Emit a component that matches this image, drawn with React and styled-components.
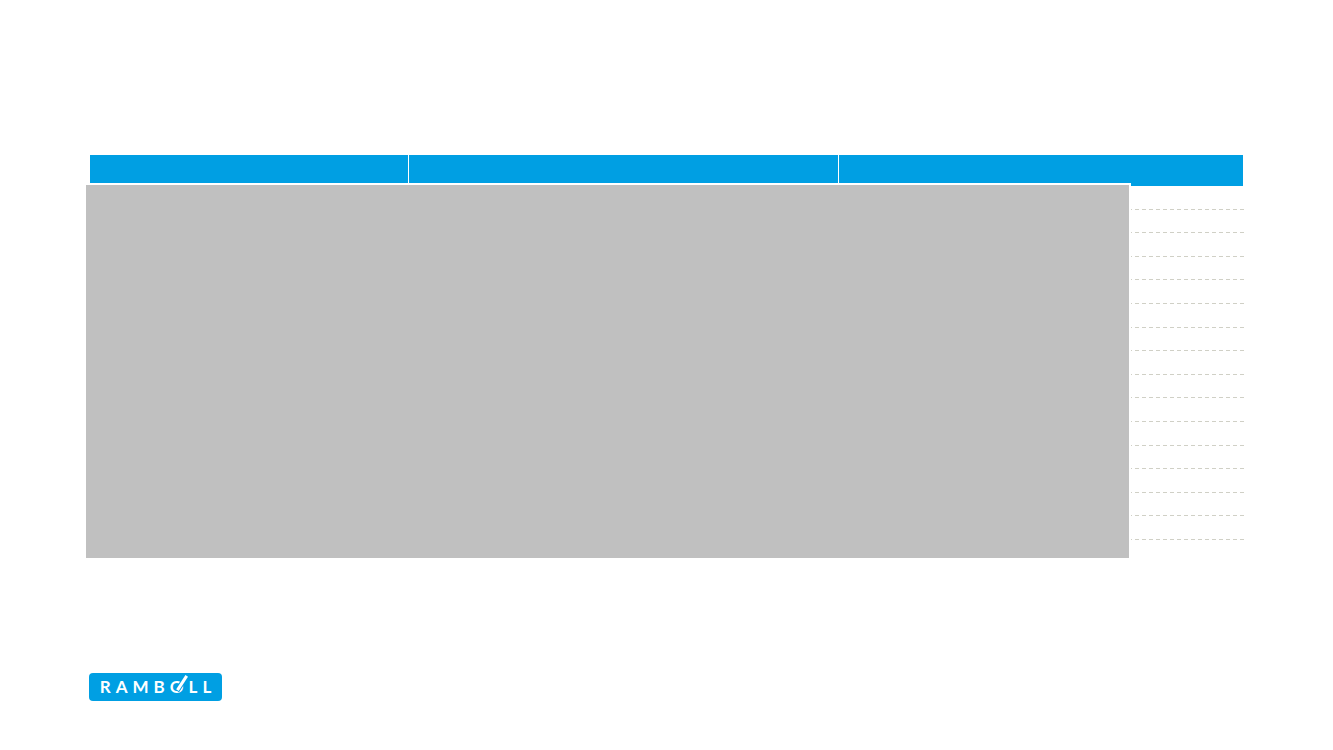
import React from 'react'
import styled, { createGlobalStyle } from 'styled-components'

const GlobalStyle = createGlobalStyle`
  html, body {
    margin: 0;
    padding: 0;
    background: #ffffff;
  }
  body {
    font-family: "Liberation Sans", Arial, sans-serif;
  }
`

const ROWS = 15

const App = () => {
  return (
    <Page>
      <GlobalStyle />
      <TableWrap>
        <HeaderRow>
          <HeaderCell />
          <HeaderCell />
          <HeaderCell />
        </HeaderRow>
        {Array.from({ length: ROWS }).map((_, i) => (
          <BodyRow key={i} />
        ))}
        <Overlay />
      </TableWrap>
      <Logo>
        R
        <span>A</span>
        <span>M</span>
        <span>B</span>
        <LogoO>O</LogoO>
        <span>L</span>
        <span>L</span>
      </Logo>
    </Page>
  )
}

export default App

const Page = styled.div`
  width: 1333px;
  height: 750px;
  box-sizing: border-box;
  padding: 155px 0 0 90px;
  display: flex;
  flex-direction: column;
  align-items: flex-start;
  overflow: hidden;
`
const TableWrap = styled.div`
  position: relative;
  width: 1153px;
  display: flex;
  flex-direction: column;
`
const HeaderRow = styled.div`
  display: grid;
  grid-template-columns: 318px 429px 1fr;
  column-gap: 1px;
  height: 31px;
  background: #ffffff;
`
const HeaderCell = styled.div`
  background: #009fe3;
`
const BodyRow = styled.div`
  height: 23.6px;
  margin-right: -1px;
  box-sizing: border-box;
  background-image: linear-gradient(to right, #d0d0c6 4px, transparent 4px);
  background-size: 7px 1px;
  background-repeat: repeat-x;
  background-position: right -3px bottom;
`
const Overlay = styled.div`
  position: absolute;
  left: -6px;
  top: 28px;
  width: 1047px;
  height: 377px;
  box-sizing: border-box;
  border: 2px solid #ffffff;
  background: #c0c0c0;
`
const Logo = styled.div`
  margin-top: 133px;
  margin-left: -1px;
  width: 133px;
  height: 28px;
  box-sizing: border-box;
  padding-left: 5px;
  border-radius: 4px;
  background: #009fe3;
  display: flex;
  align-items: center;
  justify-content: center;
  color: #ffffff;
  font-family: Lato, "Open Sans", sans-serif;
  font-weight: 700;
  font-size: 17px;
  letter-spacing: 5px;
  line-height: 1;
`
const LogoO = styled.span`
  position: relative;
  &::after {
    content: '';
    position: absolute;
    left: 6.5px;
    bottom: 5.5px;
    width: 2.5px;
    height: 17px;
    background: #ffffff;
    box-shadow: 0 0 0 1px #009fe3;
    transform-origin: bottom center;
    transform: rotate(33deg);
  }
`
